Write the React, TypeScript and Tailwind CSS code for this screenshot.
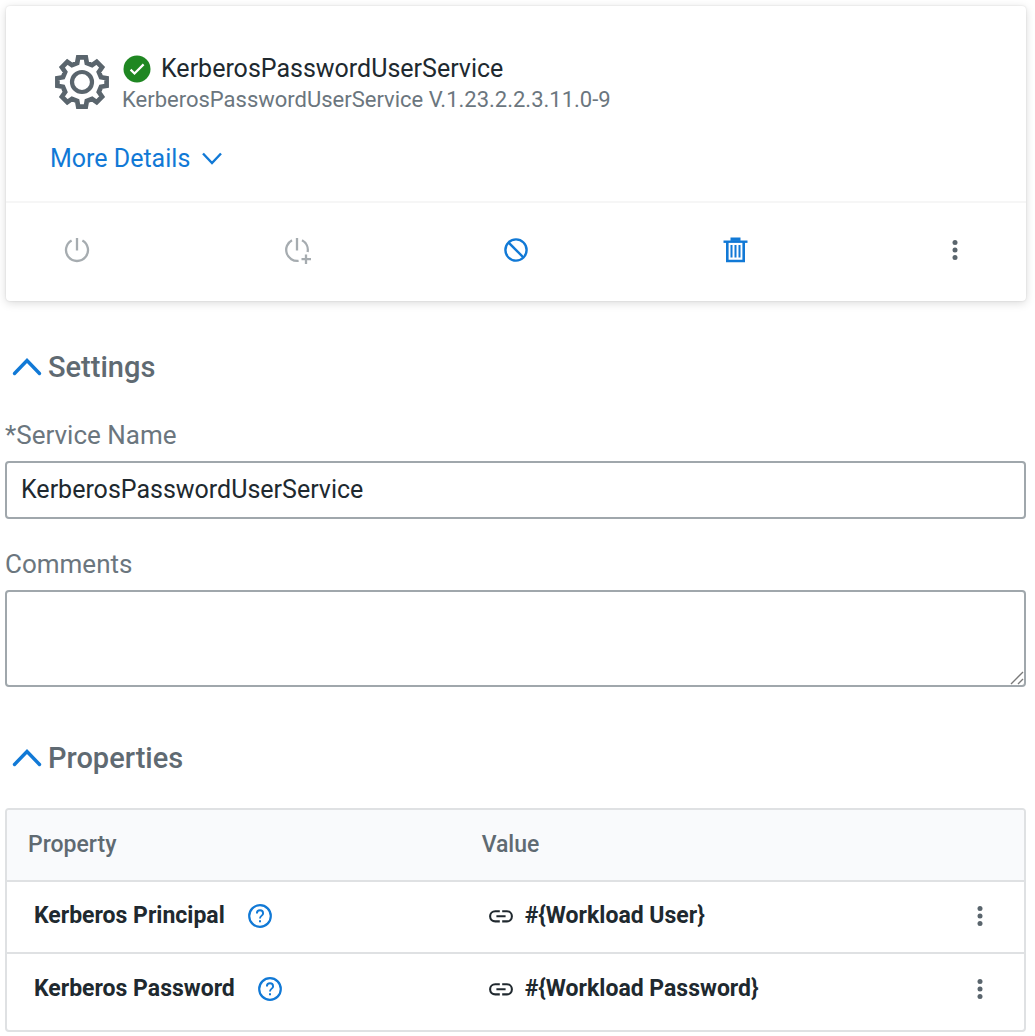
import { useState } from "react";
import type { ReactNode } from "react";

const properties = [
  { name: "Kerberos Principal", value: "#{Workload User}" },
  { name: "Kerberos Password", value: "#{Workload Password}" },
];

// Outline of an eight-toothed cog centred on the origin.
const cogPoints = Array.from({ length: 8 }, (_, tooth) => {
  const a = (tooth * Math.PI) / 4;
  return [
    [-4.8, -19],
    [-3.8, -24.6],
    [3.8, -24.6],
    [4.8, -19],
  ]
    .map(([x, y]) => {
      const px = x * Math.cos(a) - y * Math.sin(a);
      const py = x * Math.sin(a) + y * Math.cos(a);
      return `${px.toFixed(2)},${py.toFixed(2)}`;
    })
    .join(" ");
}).join(" ");

function CogIcon() {
  return (
    <svg viewBox="-28 -28 56 56" className="size-14 shrink-0 text-[#5a656d]" fill="none" stroke="currentColor" aria-hidden="true">
      <polygon points={cogPoints} strokeWidth="4.7" />
      <circle r="10" strokeWidth="4.2" />
    </svg>
  );
}

function CheckBadge() {
  return (
    <svg viewBox="0 0 28 28" className="size-7 shrink-0" aria-label="Valid" role="img">
      <circle cx="14" cy="14" r="13.5" fill="#1f8722" />
      <path d="M7.6 14.6l3.9 3.9L20.6 9.4" fill="none" stroke="white" strokeWidth="2.2" />
    </svg>
  );
}

function Chevron({ up = false }: { up?: boolean }) {
  return up ? (
    <svg viewBox="0 0 30 20" className="h-5 w-[30px] text-[#1179d6]" fill="none" stroke="currentColor" aria-hidden="true">
      <path d="M2.5 16.5L15 3.5l12.5 13" strokeWidth="3.4" strokeLinecap="round" />
    </svg>
  ) : (
    <svg viewBox="0 0 20 14" className="h-3.5 w-5" fill="none" stroke="currentColor" aria-hidden="true">
      <path d="M1 1.5l9 9.5L19 1.5" strokeWidth="2.4" />
    </svg>
  );
}

function PowerIcon({ plus = false }: { plus?: boolean }) {
  return (
    <svg viewBox="0 0 28 28" className="size-7" fill="none" stroke="currentColor" strokeWidth="2.3" aria-hidden="true">
      <path d="M14 2v12.5" />
      {plus ? (
        <>
          <path d="M9 4.2A11 11 0 0 0 15.6 24.8M19 4.2A11 11 0 0 1 24.6 16" />
          <path d="M23 18.5v9.5M18.5 23.2H28" />
        </>
      ) : (
        <path d="M8.6 4.4a11 11 0 1 0 10.8 0" />
      )}
    </svg>
  );
}

function BanIcon() {
  return (
    <svg viewBox="0 0 28 28" className="size-7" fill="none" stroke="currentColor" strokeWidth="2.4" aria-hidden="true">
      <circle cx="14" cy="14" r="10.6" />
      <path d="M6.4 6.4l15.2 15.2" />
    </svg>
  );
}

function TrashIcon() {
  return (
    <svg viewBox="0 0 28 28" className="size-7" fill="none" stroke="currentColor" aria-hidden="true">
      <path d="M1.5 5.7h24" strokeWidth="2.4" />
      <path d="M8.5 3.2h10" strokeWidth="3.4" />
      <path d="M5.3 6v19h16.4V6" strokeWidth="2.6" />
      <path d="M9.5 9v12.5M13.5 9v12.5M17.5 9v12.5" strokeWidth="2" />
    </svg>
  );
}

function DotsIcon() {
  return (
    <svg viewBox="0 0 28 28" className="size-7 text-[#5a656d]" fill="currentColor" aria-hidden="true">
      <circle cx="14" cy="6.6" r="2.5" />
      <circle cx="14" cy="14" r="2.5" />
      <circle cx="14" cy="21.4" r="2.5" />
    </svg>
  );
}

function HelpIcon() {
  return (
    <svg viewBox="0 0 24 24" className="size-6" fill="none" stroke="currentColor" aria-hidden="true">
      <circle cx="12" cy="12" r="10.8" strokeWidth="2.2" />
      <path d="M8.9 9.4a3.1 3.1 0 0 1 6.2 0c0 2.2-3.1 2.3-3.1 5" strokeWidth="1.9" />
      <path d="M12 16.2v2" strokeWidth="2" />
    </svg>
  );
}

function LinkIcon() {
  return (
    <svg viewBox="0 0 24 14" className="h-3.5 w-6 shrink-0" fill="none" stroke="currentColor" strokeWidth="2.1" aria-hidden="true">
      <path d="M10.8 2.2H6.2a5.1 5.1 0 0 0 0 10.2h4.6M13.2 2.2h4.6a5.1 5.1 0 0 1 0 10.2h-4.6M7.4 7.3h9.2" />
    </svg>
  );
}

function Section({ title, children }: { title: string; children: ReactNode }) {
  const [open, setOpen] = useState(true);
  return (
    <section>
      <h2 className="pl-[7px] text-[29px] leading-8 font-medium text-[#5f6a72]">
        <button type="button" aria-expanded={open} onClick={() => setOpen(!open)} className="flex items-center gap-1.5">
          <span className={open ? "" : "rotate-180"}>
            <Chevron up />
          </span>
          {title}
        </button>
      </h2>
      {open && children}
    </section>
  );
}

export default function App() {
  const [name, setName] = useState("KerberosPasswordUserService");
  const [comments, setComments] = useState("");
  return (
    <main className="min-h-screen bg-white pt-1.5 pr-[9px] pb-1 pl-[5px] font-['Roboto',sans-serif] text-[#20292f]">
      <article className="ml-px rounded-sm bg-white shadow-[0_2px_10px_rgba(0,0,0,0.15),0_0_2px_rgba(0,0,0,0.12)]">
        <div className="border-b-2 border-[#f6f6f6] px-11 pt-12 pb-[26px]">
          <header className="flex items-start gap-3 pl-1">
            <CogIcon />
            <div>
              <div className="flex items-center gap-2.5 pl-px">
                <CheckBadge />
                <h1 className="text-[25px] leading-[30px]">{name}</h1>
              </div>
              <p className="text-[22px] leading-8 text-[#6b767e]">KerberosPasswordUserService V.1.23.2.2.3.11.0-9</p>
            </div>
          </header>
          <button type="button" className="mt-[27px] flex items-center gap-3 text-[25px] leading-8 text-[#1179d6]">
            More Details
            <Chevron />
          </button>
        </div>
        <div className="flex items-center justify-between px-[57px] pt-[33px] pb-[37px]">
          <button type="button" aria-label="Enable" disabled className="text-[#a6acb0]"><PowerIcon /></button>
          <button type="button" aria-label="Enable with references" disabled className="text-[#a6acb0]"><PowerIcon plus /></button>
          <button type="button" aria-label="Disable" className="text-[#1179d6]"><BanIcon /></button>
          <button type="button" aria-label="Delete" className="text-[#1179d6]"><TrashIcon /></button>
          <button type="button" aria-label="More actions"><DotsIcon /></button>
        </div>
      </article>

      <div className="mt-[50px]">
        <Section title="Settings">
          <div className="mt-9 flex flex-col">
            <label htmlFor="service-name" className="text-[26px] leading-8 text-[#6b767e]">*Service Name</label>
            <input
              id="service-name"
              value={name}
              onChange={(e) => setName(e.target.value)}
              className="mt-2.5 h-[58px] rounded-sm border-2 border-[#a0a7ac] px-3.5 pb-0.5 text-[25px] leading-8 outline-none"
            />
            <label htmlFor="comments" className="mt-[29px] text-[26px] leading-8 text-[#6b767e]">Comments</label>
            <div className="relative mt-2.5 flex">
              <textarea
                id="comments"
                value={comments}
                onChange={(e) => setComments(e.target.value)}
                className="h-[97px] w-full resize-y rounded-sm border-2 border-[#a0a7ac] px-3.5 py-2 text-[25px] leading-8 outline-none [&::-webkit-resizer]:bg-transparent"
              />
              <svg viewBox="0 0 14 14" className="pointer-events-none absolute right-0.5 bottom-0.5 size-3.5" fill="none" stroke="#7a7a7a" strokeWidth="1.4" aria-hidden="true">
                <path d="M1 13L13 1M8 13l5-5" />
              </svg>
            </div>
          </div>
        </Section>
      </div>

      <div className="mt-[55px]">
        <Section title="Properties">
          <div className="mt-[34px] overflow-hidden rounded-sm border-2 border-[#dfe1e3]">
            <table className="w-full table-fixed border-collapse text-left text-[23px] leading-8">
              <thead className="bg-[#f9fafc] text-[#5f6a72]">
                <tr className="h-[71px] border-b-2 border-[#dfe1e3]">
                  <th scope="col" className="w-[45%] pl-[21px] font-medium">Property</th>
                  <th scope="col" className="pl-[17px] font-medium">Value</th>
                  <td className="w-[90px]" />
                </tr>
              </thead>
              <tbody>
                {properties.map((p) => (
                  <tr key={p.name} className="h-[72px] border-b-2 border-[#dfe1e3] last:h-[77px] last:border-b-0 last:*:pb-1.5">
                    <th scope="row" className="pb-0.5 pl-[27px] font-bold">
                      <div className="flex items-center gap-[23px]">
                        {p.name}
                        <button type="button" aria-label={`About ${p.name}`} className="text-[#1179d6]"><HelpIcon /></button>
                      </div>
                    </th>
                    <td className="pb-0.5 pl-6 font-bold">
                      <div className="flex items-center gap-3"><LinkIcon />{p.value}</div>
                    </td>
                    <td className="pb-0.5">
                      <div className="flex justify-center pl-0.5">
                        <button type="button" aria-label={`Actions for ${p.name}`}><DotsIcon /></button>
                      </div>
                    </td>
                  </tr>
                ))}
              </tbody>
            </table>
          </div>
        </Section>
      </div>
    </main>
  );
}
